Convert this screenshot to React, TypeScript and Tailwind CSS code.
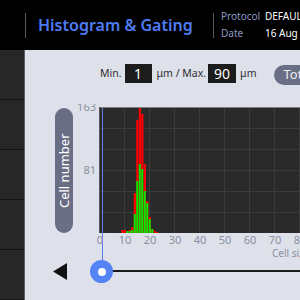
import React from "react";

// bins: [offset from axis 0 in px, red top y, green top y] in page pixels of the chart (bottom = 233)
const bins: [number, number, number | null][] = [
  [21.25, 230, null],
  [23.75, 230, null],
  [26.25, 231, 231],
  [28.75, 230, 231],
  [31.25, 227, 230],
  [33.75, 193, 214],
  [36.25, 120, 181],
  [38.75, 108, 164],
  [41.25, 114, 169],
  [43.75, 164, 191],
  [46.25, 201, 203],
  [48.75, 217, 219],
  [51.25, 229, 229],
  [53.75, 231, null],
  [56.25, 232, null],
];

function Histogram() {
  // svg origin sits at page (78, 104); chart area x 22.., y 3..129
  const x0 = 22;
  const bottom = 129;
  const ticks = [0, 10, 20, 30, 40, 50, 60, 70, 80, 90];
  return (
    <svg width="262" height="156" className="block shrink-0">
      <rect x={x0} y={3} width={240} height={126} fill="#2a2a2a" />
      {ticks.slice(1).map((t, i) => (
        <line key={t} x1={x0 + 25 * (i + 1) - 0.5} x2={x0 + 25 * (i + 1) - 0.5} y1={3} y2={bottom} stroke="#3b3b3b" strokeWidth={1} />
      ))}
      {[24, 45, 66, 87, 108].map((y) => (
        <line key={y} x1={x0} x2={x0 + 240} y1={y + 0.5} y2={y + 0.5} stroke="#3b3b3b" strokeWidth={1} />
      ))}
      <line x1={x0} x2={x0 + 240} y1={3.5} y2={3.5} stroke="#7d7d7d" strokeWidth={1} />
      <line x1={x0 - 0.5} x2={x0 - 0.5} y1={3} y2={bottom} stroke="#55555a" strokeWidth={1} />

      {bins.map(([r, red]) => (
        <rect key={"r" + r} x={x0 + r} y={red - 104} width={2.2} height={233 - red} fill="#ff0000" />
      ))}
      {bins.map(([r, , green]) =>
        green == null ? null : (
          <rect key={"g" + r} x={x0 + r} y={green - 104} width={2} height={233 - green} fill="#00e800" />
        )
      )}

      <line x1={24.5} x2={24.5} y1={4} y2={156} stroke="#5d7fe8" strokeWidth={1} />

      <g fill="#8b8fa1" fontSize="11" fontFamily="Noto Sans, sans-serif">
        <text x={18} y={7} textAnchor="end">163</text>
        <text x={18} y={70} textAnchor="end">81</text>
        {ticks.map((t, i) => (
          <text key={t} x={x0 + 25 * i} y={139.5} textAnchor="middle">
            {t}
          </text>
        ))}
        <text x={194} y={152.5} fontSize="10">Cell size (μm)</text>
      </g>
    </svg>
  );
}

export default function App() {
  return (
    <div className="w-[300px] h-[300px] overflow-hidden bg-black font-['Noto_Sans',sans-serif]">
      <header className="flex h-[50px] items-center">
        <div className="w-[25px] shrink-0" />
        <div className="h-[25px] w-px shrink-0 bg-[#5a5a5a]" />
        <h1 className="ml-[12px] w-[175px] shrink-0 text-[16px] font-semibold text-[#4e7cf2]">Histogram &amp; Gating</h1>
        <div className="h-[25px] w-px shrink-0 bg-[#5a5a5a]" />
        <div className="ml-[7px] grid shrink-0 grid-cols-[44px_auto] text-[10px] leading-[17px] whitespace-nowrap">
          <span className="text-[#8d97c0]">Protocol</span>
          <span className="text-white">DEFAULT</span>
          <span className="text-[#8d97c0]">Date</span>
          <span className="text-white">16 Aug 2025</span>
        </div>
      </header>

      <div className="flex h-[250px]">
        <nav className="w-[25px] shrink-0 border-r border-[#5e5e64] bg-[#272727]">
          {[0, 1, 2, 3, 4].map((i) => (
            <div key={i} className="h-[50px] border-b border-[#151515]" />
          ))}
        </nav>

        <main className="w-[420px] shrink-0 bg-[#dee1ea]">
          <div className="mt-[14px] flex items-start pl-[75px] text-[10.5px] text-[#2f2f33] whitespace-nowrap">
            <span className="mt-[2px]">Min.</span>
            <span className="ml-[3px] flex h-[19px] w-[27px] items-center justify-center bg-[#1c1c1c] text-[14px] text-white">1</span>
            <span className="ml-[5px] mt-[2px]">μm / Max.</span>
            <span className="ml-[2px] flex h-[19px] w-[28px] items-center justify-center bg-[#1c1c1c] text-[14px] text-white">90</span>
            <span className="ml-[4px] mt-[2px]">μm</span>
            <span className="ml-[18px] mt-[1px] flex h-[20px] items-center rounded-full bg-[#6a6e85] px-[9px] text-[13px] text-[#eceef4]">Total</span>
          </div>

          <div className="mt-[19px] flex items-start">
            <div className="ml-[30px] mt-[4px] flex h-[125px] w-[18px] shrink-0 items-center justify-center rounded-full bg-[#6a6e85]">
              <span className="-rotate-90 whitespace-nowrap text-[13px] text-white">Cell number</span>
            </div>
            <div className="ml-[5px]">
              <Histogram />
            </div>
          </div>

          <div className="flex h-[23px] items-center">
            <svg width="14" height="17" className="ml-[28px] shrink-0">
              <polygon points="0,8.5 14,0 14,17" fill="#111" />
            </svg>
            <div className="relative ml-[23px] h-[23px] flex-1">
              <div className="absolute left-[11px] right-0 top-[10px] h-[2px] bg-[#1a1a1a]" />
              <div className="absolute left-0 top-0 flex h-[23px] w-[23px] items-center justify-center rounded-full bg-[#5583f3]">
                <div className="h-[8px] w-[8px] rounded-full bg-white" />
              </div>
            </div>
          </div>
        </main>
      </div>
    </div>
  );
}
